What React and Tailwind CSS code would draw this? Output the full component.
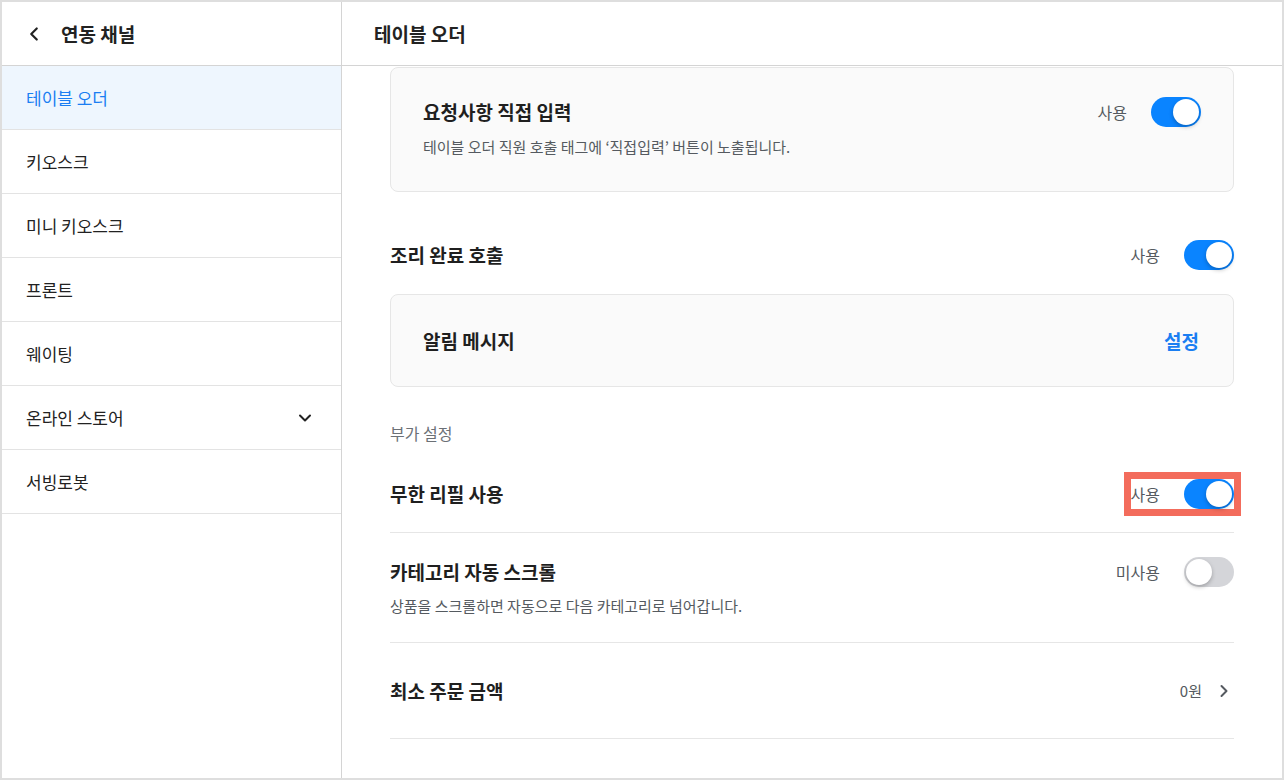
import React from "react";
import { ChevronLeft, ChevronDown, ChevronRight } from "lucide-react";

const FONT = { fontFamily: '"Noto Sans CJK KR", "Noto Sans", sans-serif' };

const channels = [
  { label: "테이블 오더", active: true },
  { label: "키오스크" },
  { label: "미니 키오스크" },
  { label: "프론트" },
  { label: "웨이팅" },
  { label: "온라인 스토어", expandable: true },
  { label: "서빙로봇" },
];

function Toggle({ on }) {
  return (
    <div
      className={
        "flex h-[30px] w-[50px] items-center rounded-full p-[2px] " +
        (on ? "justify-end bg-[#0a84ff]" : "justify-start bg-[#d4d5d9]")
      }
    >
      <div className="h-[26px] w-[26px] rounded-full bg-white shadow-[0_2px_4px_rgba(0,0,0,0.25)]" />
    </div>
  );
}

function Switch({ on, label }) {
  return (
    <div className="flex items-center gap-6">
      <span className="text-[16px] leading-[22px] text-[#555a60]">{label}</span>
      <Toggle on={on} />
    </div>
  );
}

export default function App() {
  return (
    <div
      className="flex h-[780px] w-[1284px] overflow-hidden border-2 border-[#dedede] bg-white text-[#1f1f1f]"
      style={FONT}
    >
      <aside className="flex w-[340px] shrink-0 flex-col border-r border-[#d4d4d4]">
        <div className="flex h-16 items-center gap-[16px] border-b border-[#d4d4d4] pl-[21px]">
          <ChevronLeft className="h-[22px] w-[22px] text-[#222]" strokeWidth={2.4} />
          <span className="text-[19px] font-bold leading-6 text-[#222]">연동 채널</span>
        </div>
        {channels.map((c) => (
          <div
            key={c.label}
            className={
              "flex h-16 items-center justify-between border-b border-[#e3e3e3] pl-6 pr-[26px] " +
              (c.active ? "bg-[#eef6fe] text-[#1a7ef2]" : "text-[#222]")
            }
          >
            <span className="text-[17px] leading-6">{c.label}</span>
            {c.expandable && <ChevronDown className="h-5 w-5 text-[#222]" strokeWidth={2.4} />}
          </div>
        ))}
      </aside>

      <main className="flex min-w-0 flex-1 flex-col">
        <div className="flex h-16 shrink-0 items-center border-b border-[#d4d4d4] pl-8">
          <span className="text-[19px] font-bold leading-6 text-[#222]">테이블 오더</span>
        </div>

        <div className="flex-1 overflow-hidden px-12 pt-px">
          <div className="rounded-lg border border-[#e6e6e6] bg-[#fafafa] px-8 pb-[34px] pt-[29px]">
            <div className="flex h-[30px] items-center justify-between">
              <span className="text-[19px] font-semibold leading-[26px]">요청사항 직접 입력</span>
              <Switch on label="사용" />
            </div>
            <p className="mt-[10px] text-[15px] leading-5 text-[#555a60]">
              테이블 오더 직원 호출 태그에 ‘직접입력’ 버튼이 노출됩니다.
            </p>
          </div>

          <div className="mt-12 flex h-[30px] items-center justify-between">
            <span className="text-[19px] font-semibold leading-[26px]">조리 완료 호출</span>
            <Switch on label="사용" />
          </div>

          <div className="mt-6 flex h-[93px] items-center justify-between rounded-lg border border-[#e6e6e6] bg-[#fafafa] pl-8 pr-[34px]">
            <span className="text-[19px] font-semibold leading-[26px]">알림 메시지</span>
            <span className="text-[19px] font-semibold leading-[26px] text-[#1a7ef2]">설정</span>
          </div>

          <div className="pb-3 pt-9 text-[16px] leading-5 text-[#6b7076]">부가 설정</div>

          <div className="flex items-center justify-between border-b border-[#e6e6e6] pb-[23px] pt-6">
            <span className="text-[19px] font-semibold leading-[26px]">무한 리필 사용</span>
            <div className="-m-[7px] border-[7px] border-[#f36c5c]">
              <Switch on label="사용" />
            </div>
          </div>

          <div className="border-b border-[#e6e6e6] pb-[26px] pt-6">
            <div className="flex h-[30px] items-center justify-between">
              <span className="text-[19px] font-semibold leading-[26px]">카테고리 자동 스크롤</span>
              <Switch on={false} label="미사용" />
            </div>
            <p className="mt-[9px] text-[15px] leading-5 text-[#555a60]">
              상품을 스크롤하면 자동으로 다음 카테고리로 넘어갑니다.
            </p>
          </div>

          <div className="flex h-[96px] items-center justify-between border-b border-[#e6e6e6]">
            <span className="text-[19px] font-semibold leading-[26px]">최소 주문 금액</span>
            <div className="flex items-center gap-3">
              <span className="text-[15px] leading-5 text-[#555a60]">0원</span>
              <ChevronRight className="h-5 w-5 text-[#555a60]" strokeWidth={2.4} />
            </div>
          </div>
        </div>
      </main>
    </div>
  );
}
